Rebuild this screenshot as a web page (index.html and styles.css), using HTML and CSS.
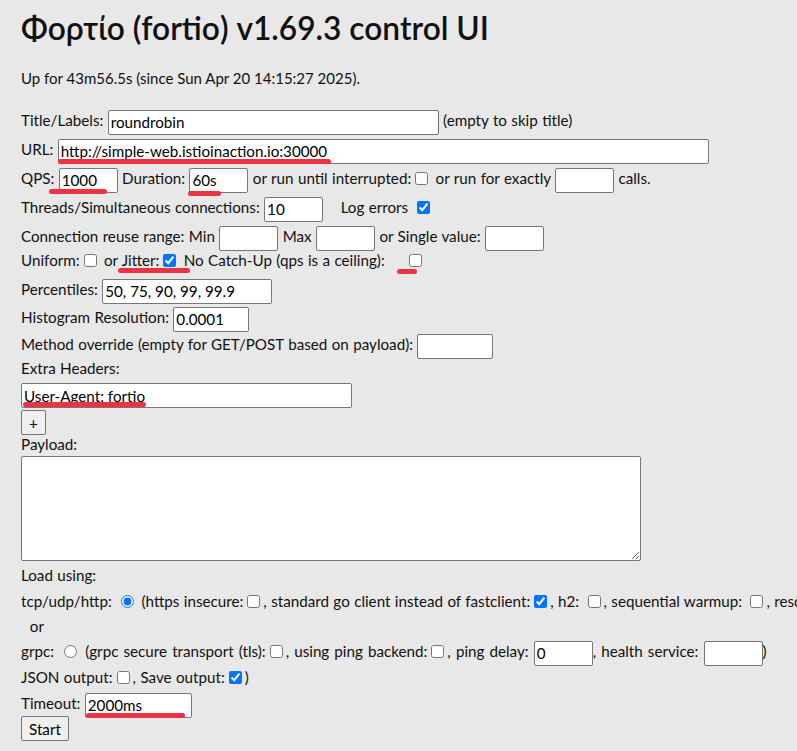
FILE: index.html
```html
<!DOCTYPE html>
<html lang="en">
<head>
  <meta charset="UTF-8" />
  <meta name="viewport" content="width=device-width, initial-scale=1.0" />
  <title>Φορτίο (fortio) control UI</title>
  <link rel="stylesheet" href="styles.css">
</head>
<body>
  <h1>Φορτίο (fortio) v1.69.3 control UI</h1>
  <p class="uptime">Up for 43m56.5s (since Sun Apr 20 14:15:27 2025).</p>

  <form class="run-form">
    <div class="row">Title/Labels: <input type="text" class="size-40" value="roundrobin"> (empty to skip title)</div>
    <div class="row">URL: <input type="text" class="size-80" value="http://simple-web.istioinaction.io:30000"></div>
    <div class="row">QPS: <input type="text" class="size-6" value="1000"> Duration: <input type="text" class="size-6" value="60s"> or run until interrupted:<input type="checkbox"> or run for exactly <input type="text" class="size-6"> calls.</div>
    <div class="row">Threads/Simultaneous connections: <input type="text" class="size-6" value="10"> &nbsp;&nbsp;&nbsp;Log errors <input type="checkbox" checked></div>
    <div class="row">Connection reuse range: Min <input type="text" class="size-6"> Max <input type="text" class="size-6"> or Single value: <input type="text" class="size-6"></div>
    <div class="row flags">Uniform:<input type="checkbox"> or Jitter:<input type="checkbox" checked> No Catch-Up (qps is a ceiling):<span class="gap"></span><input type="checkbox"></div>
    <div class="row">Percentiles: <input type="text" class="size-20" value="50, 75, 90, 99, 99.9"></div>
    <div class="row mid">Histogram Resolution: <input type="text" class="size-8" value="0.0001"></div>
    <div class="row">Method override (empty for GET/POST based on payload): <input type="text" class="size-8"></div>
    <div class="row label">Extra Headers:</div>
    <div class="field"><input type="text" class="size-40" value="User-Agent: fortio"></div>
    <button type="button" class="btn">+</button>
    <div class="row label">Payload:</div>
    <textarea class="payload"></textarea>
    <div class="row plain">Load using:</div>
    <div class="row mid">tcp/udp/http: <input type="radio" name="runner" checked> (https insecure:<input type="checkbox">, standard go client instead of fastclient:<input type="checkbox" checked>, h2: <input type="checkbox">, sequential warmup: <input type="checkbox">, resolve: <input type="text" class="size-20">)</div>
    <div class="row short">&nbsp;&nbsp;or</div>
    <div class="row mid grpc">grpc: <input type="radio" name="runner"> (grpc secure transport (tls):<input type="checkbox">, using ping backend:<input type="checkbox">, ping delay: <input type="text" class="size-6" value="0">, health service: <input type="text" class="size-6">)</div>
    <div class="row mid">JSON output:<input type="checkbox">, Save output:<input type="checkbox" checked>)</div>
    <div class="row mid">Timeout: <input type="text" class="size-12" value="2000ms"></div>
    <button type="button" class="btn">Start</button>
  </form>

  <!-- red pen marks drawn over the screenshot -->
  <span class="mark mark-url"></span>
  <span class="mark mark-qps"></span>
  <span class="mark mark-duration"></span>
  <span class="mark mark-jitter"></span>
  <span class="mark mark-ceiling"></span>
  <span class="mark mark-agent"></span>
  <span class="mark mark-timeout"></span>
</body>
</html>
```

FILE: styles.css
```css
html {
  background: #e8e8e8;
}
body {
  position: relative;
  margin: 0;
  padding: 8px 0 0 21px;
  font-family: Lato, "Liberation Sans", sans-serif;
  font-size: 15px;
  color: #111;
  overflow: hidden;
}
h1 {
  margin: 0;
  font-size: 31.7px;
  font-weight: 600;
  line-height: 40px;
}
.uptime {
  margin: 20px 0 18px;
  line-height: 20px;
}
.run-form {
  overflow: hidden;
  font-size: 15.2px;
  word-spacing: 0.5px;
}
.row {
  height: 29px;
  line-height: 29px;
  white-space: nowrap;
}
.row.short {
  height: 24px;
  line-height: 24px;
}
.row.flags {
  height: 19px;
  padding-bottom: 5px;
  line-height: 19px;
}
.row.mid {
  height: 26px;
  line-height: 26px;
}
.row.plain {
  height: 25px;
  line-height: 25px;
}
.row.label {
  height: 19px;
  line-height: 19px;
}
.row.grpc {
  word-spacing: 1.2px;
}
.gap {
  display: inline-block;
  width: 20px;
}
input[type="text"],
textarea {
  box-sizing: border-box;
  height: 25px;
  margin: 0;
  padding: 1px 2px;
  border: 1px solid #767676;
  border-radius: 2px;
  background: #fff;
  font: inherit;
  word-spacing: normal;
  line-height: normal;
  color: #000;
  vertical-align: middle;
}
input[type="checkbox"],
input[type="radio"] {
  vertical-align: -1px;
}
.size-6 { width: 59px; }
.size-8 { width: 76px; }
.size-12 { width: 107px; }
.size-20 { width: 170px; }
.size-40 { width: 331px; }
.size-80 { width: 651px; }
.field {
  padding: 5px 0 2px;
}
.field input[type="text"] {
  display: block;
}
.btn {
  display: block;
  box-sizing: border-box;
  height: 25px;
  margin: 0;
  padding: 0 7px;
  border: 1px solid #767676;
  border-radius: 2px;
  background: #efefef;
  font: inherit;
  color: #000;
}
.payload {
  display: block;
  width: 620px;
  height: 105px;
  margin: 2px 0;
}
.mark {
  position: absolute;
  height: 5px;
  border-radius: 3px;
  background: #ec3342;
}
.mark-url { left: 58px; top: 159px; width: 273px; }
.mark-qps { left: 49px; top: 189px; width: 58px; }
.mark-duration { left: 188px; top: 191px; width: 33px; }
.mark-jitter { left: 118px; top: 268px; width: 72px; }
.mark-ceiling { left: 397px; top: 269px; width: 20px; }
.mark-agent { left: 23px; top: 402px; width: 123px; }
.mark-timeout { left: 86px; top: 713px; width: 99px; }
```
